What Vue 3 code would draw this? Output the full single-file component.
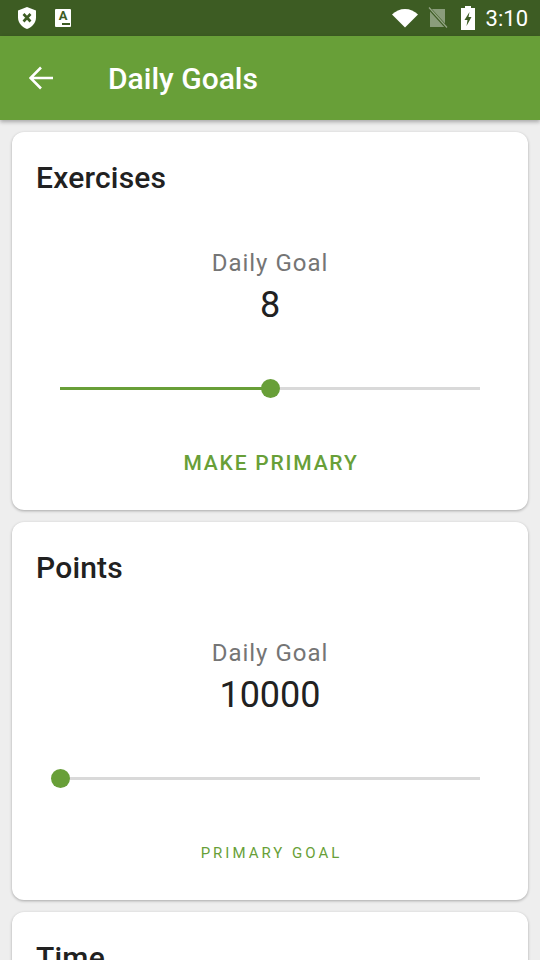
<script setup>
// 每日目标卡片数据
const goals = [
  { name: "Exercises", value: "8", percent: 50, primary: false },
  { name: "Points", value: "10000", percent: 0, primary: true },
  { name: "Time", value: "30", percent: 20, primary: false },
];
</script>

<template>
  <div class="page">
    <div class="status-bar">
      <svg class="st-shield" width="20" height="24" viewBox="0 0 20 24">
        <path d="M10 1 L19 4.5 V11.5 C19 17 15 21 10 23 C5 21 1 17 1 11.5 V4.5 Z" fill="#fff" />
        <path d="M6.5 8 L13.5 15.5 M13.5 8 L6.5 15.5" stroke="#3d5c23" stroke-width="2.6" fill="none" />
      </svg>
      <div class="st-a"><span>A</span><i></i></div>
      <div class="spacer"></div>
      <svg class="st-wifi" width="26" height="20" viewBox="0 0 26 20">
        <path d="M0 6.5 C7 -1 19 -1 26 6.5 L13 19.5 Z" fill="#fff" />
      </svg>
      <svg class="st-sim" width="20" height="22" viewBox="0 0 20 22">
        <path d="M2 2 H17 V20 H2 Z" fill="#fff" fill-opacity="0.4" />
        <path d="M0 0 L20 22" stroke="#3d5c23" stroke-width="3" />
        <path d="M1 0.5 L19 20.5" stroke="#fff" stroke-opacity="0.45" stroke-width="1.2" />
      </svg>
      <svg class="st-batt" width="14" height="24" viewBox="0 0 14 24">
        <path d="M4 0 H10 V2 H14 V24 H0 V2 H4 Z" fill="#fff" />
        <path d="M8.5 6 L3.5 14 H6.5 L5.5 20 L10.5 11 H7.5 Z" fill="#3d5c23" />
      </svg>
      <span class="st-time">3:10</span>
    </div>

    <header class="app-bar">
      <svg class="back" width="24" height="24" viewBox="0 0 24 24">
        <path d="M24 12 H2 M12 1.5 L1.5 12 L12 22.5" stroke="#fff" stroke-width="2.6" fill="none" />
      </svg>
      <h1>Daily Goals</h1>
    </header>

    <main class="list">
      <section v-for="goal in goals" :key="goal.name" class="card">
        <h2>{{ goal.name }}</h2>
        <div class="label">Daily Goal</div>
        <div class="value">{{ goal.value }}</div>
        <div class="track">
          <div class="fill" :style="{ width: goal.percent + '%' }"></div>
          <div class="thumb" :style="{ left: goal.percent + '%' }"></div>
        </div>
        <div v-if="goal.primary" class="primary-tag">PRIMARY GOAL</div>
        <div v-else class="make-primary">MAKE PRIMARY</div>
      </section>
    </main>
  </div>
</template>

<style>
html,
body {
  margin: 0;
  background: #eeeeee;
}
</style>

<style scoped>
.page {
  width: 540px;
  height: 960px;
  overflow: hidden;
  background: #eeeeee;
  font-family: Roboto, "Liberation Sans", sans-serif;
}
.status-bar {
  height: 36px;
  background: #3d5c23;
  display: flex;
  align-items: center;
  padding: 0 12px 0 17px;
  box-sizing: border-box;
}
.spacer {
  flex: 1;
}
.st-a {
  width: 16px;
  height: 18px;
  margin-left: 18px;
  background: #fff;
  border-radius: 1px;
  display: flex;
  flex-direction: column;
  align-items: center;
  color: #3d5c23;
  font-size: 13px;
  font-weight: 700;
  line-height: 13px;
}
.st-a i {
  width: 8px;
  height: 2px;
  margin: 1px 0 0 6px;
  background: #3d5c23;
}
.st-wifi {
  margin-right: 10px;
}
.st-sim {
  margin-right: 13px;
}
.st-batt {
  margin-right: 11px;
}
.st-time {
  color: #fff;
  font-size: 22px;
  font-weight: 400;
}
.app-bar {
  height: 84px;
  background: #689f38;
  display: flex;
  align-items: center;
  padding: 0 0 0 29px;
  box-sizing: border-box;
  box-shadow: 0 2px 4px rgba(0, 0, 0, 0.3);
  position: relative;
}
.back {
  margin-top: -1px;
}
.app-bar h1 {
  margin: 0 0 0 55px;
  color: #fff;
  font-size: 30px;
  font-weight: 500;
}
.list {
  display: flex;
  flex-direction: column;
  gap: 12px;
  padding: 12px;
}
.card {
  height: 378px;
  flex: none;
  box-sizing: border-box;
  background: #fff;
  border-radius: 12px;
  padding: 29px 24px 0;
  box-shadow: 0 1px 3px rgba(0, 0, 0, 0.3);
  text-align: center;
}
.card h2 {
  margin: 0;
  text-align: left;
  color: #212121;
  font-size: 30px;
  line-height: 34px;
  font-weight: 500;
  letter-spacing: 0.2px;
}
.label {
  margin-top: 53px;
  color: #757575;
  font-size: 24px;
  line-height: 30px;
  letter-spacing: 1px;
}
.value {
  margin-top: 3px;
  color: #212121;
  font-size: 36px;
  line-height: 48px;
}
.track {
  position: relative;
  height: 3px;
  margin: 58px 24px 0;
  background: #d9d9d9;
}
.fill {
  height: 100%;
  background: #689f38;
}
.thumb {
  position: absolute;
  top: -8px;
  width: 19px;
  height: 19px;
  margin-left: -9px;
  border-radius: 50%;
  background: #689f38;
}
.make-primary {
  margin-top: 58px;
  padding-left: 2px;
  color: #689f38;
  font-size: 21px;
  line-height: 30px;
  font-weight: 500;
  letter-spacing: 1.8px;
}
.primary-tag {
  margin-top: 62px;
  padding-left: 3px;
  color: #689f38;
  font-size: 15px;
  line-height: 22px;
  letter-spacing: 3px;
}
</style>
